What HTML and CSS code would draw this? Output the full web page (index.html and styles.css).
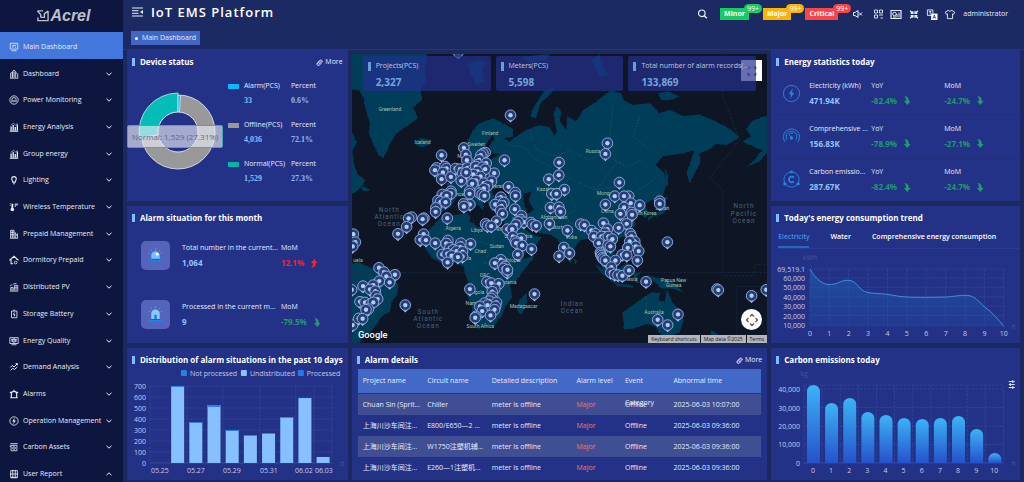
FILE: index.html
```html
<!DOCTYPE html>
<html lang="en">
<head>
<meta charset="utf-8">
<title>IoT EMS Platform</title>
<link rel="stylesheet" href="styles.css">
</head>
<body>
<svg class="defs" aria-hidden="true">
  <defs>
    <symbol id="chev" viewBox="0 0 8 8"><path d="M1.5 2.8 4 5.2 6.500 2.800" fill="none" stroke="currentColor"/></symbol>
    <symbol id="up" viewBox="0 0 8 10"><path d="M4.300 0 8 4.500H6C6 7.500 4.800 9.500 1 10 2.600 8.500 2.800 6.500 2.800 4.500H.600Z" fill="currentColor"/></symbol>
    <symbol id="down" viewBox="0 0 8 10"><path d="M4.300 10 8 5.500H6C6 2.500 4.800.5 1 0 2.600 1.500 2.800 3.500 2.800 5.500H.600Z" fill="currentColor"/></symbol>
    <symbol id="clip" viewBox="0 0 8 8"><path d="M1 5.500 4.500 1.500Q6 .5 7 2T6 4.500L4 7Q2.500 8 1.500 7T1.600 4.800L4.500 2M3 6 6 2.500" fill="none" stroke="currentColor"/></symbol>
    <symbol id="i-energy" viewBox="0 0 12 12"><path d="M1 11h10M2.500 10V5.500M5 10V3.500M7.500 10V6M10 10V3" stroke="currentColor" stroke-width="1.600"/><path d="M2 4 5.500 1.500 8 4 10 1.500" fill="none" stroke="currentColor" stroke-width=".7"/></symbol>
  </defs>
</svg>
<div class="app">
  <aside class="side">
    <div class="logo">
      <svg viewBox="0 0 13 13"><path d="M.5 1h6M.5 1 4 5v3M12 1v10.500H1V8M7.500 4.500 12 1M4 8h4V4" fill="none" stroke="currentColor" stroke-width="1.500"/></svg>
      <span>Acrel</span>
    </div>
    <nav class="menu">
      <a href="#" class="on"><svg viewBox="0 0 12 12"><path d="M1.500 1.500h9v7h-9zM3 10.500h6M3.500 4h5M3.500 6h2M7 6h1.500" fill="none" stroke="currentColor"/></svg>Main Dashboard</a>
      <a href="#"><svg viewBox="0 0 12 12"><path d="M1 11h10M2 10.500V5l2-1v6.500M4.500 10.500V2.500L6 1.500l2 1.500v7.500M8.500 4.500 10.500 6v4.500M6.200 3v7" fill="none" stroke="currentColor"/></svg>Dashboard<svg class="chev"><use href="#chev"/></svg></a>
      <a href="#"><svg viewBox="0 0 12 12"><circle cx="6" cy="6" r="5" fill="none" stroke="currentColor"/><path d="M3.500 8.500V5.500a2.500 2.500 0 0 1 5 0v3M5 8.500V6M7 8.500V6" fill="none" stroke="currentColor"/></svg>Power Monitoring<svg class="chev"><use href="#chev"/></svg></a>
      <a href="#"><svg><use href="#i-energy"/></svg>Energy Analysis<svg class="chev"><use href="#chev"/></svg></a>
      <a href="#"><svg><use href="#i-energy"/></svg>Group energy<svg class="chev"><use href="#chev"/></svg></a>
      <a href="#"><svg viewBox="0 0 12 12"><path d="M4.500 8.500C4.500 7 3.300 6.600 3.300 4.600a2.700 2.700 0 0 1 5.400 0C8.700 6.600 7.500 7 7.500 8.500zM5 10.500h2" fill="none" stroke="currentColor" stroke-width="1.300"/></svg>Lighting<svg class="chev"><use href="#chev"/></svg></a>
      <a href="#"><svg viewBox="0 0 12 12"><path d="M4 2v6" stroke="currentColor" stroke-width="2.200"/><circle cx="4" cy="9" r="2.200" fill="currentColor"/><path d="M7 2.500h4M7.500 2.500V6M9.500 2.500v2M1 2h1M1 4h1" fill="none" stroke="currentColor"/></svg>Wireless Temperature<svg class="chev"><use href="#chev"/></svg></a>
      <a href="#"><svg viewBox="0 0 12 12"><path d="M1 11h10M2 11V1.500h4V11M4 2v9M2 4h4M2 7h4M7.500 4v7M7.500 5 10 8.500M10 5v6" fill="none" stroke="currentColor"/></svg>Prepaid Management<svg class="chev"><use href="#chev"/></svg></a>
      <a href="#"><svg viewBox="0 0 12 12"><path d="M.5 6.500 6 1.500l5.500 5M2.500 5.500v5h2.500M9.500 5v1" fill="none" stroke="currentColor" stroke-width="1.300"/><circle cx="8" cy="9" r="1.600" fill="none" stroke="currentColor"/></svg>Dormitory Prepaid<svg class="chev"><use href="#chev"/></svg></a>
      <a href="#"><svg viewBox="0 0 12 12"><path d="M1 11h10M2 10.500V6.500h3v4M3.500 6.500v4M6.500 10.500V4h4v6.500M8.500 4v6.500M1 4.500 4 3M5 2.500 9 1.500M6.500 7h4" fill="none" stroke="currentColor" stroke-width=".9"/></svg>Distributed PV<svg class="chev"><use href="#chev"/></svg></a>
      <a href="#"><svg viewBox="0 0 12 12"><path d="M3 2.500h6.500v8H3zM5 1.500h2.500M6.500 4 5.200 6.500h2L6 9" fill="none" stroke="currentColor"/></svg>Storage Battery<svg class="chev"><use href="#chev"/></svg></a>
      <a href="#"><svg viewBox="0 0 12 12"><path d="M1 2h10v7H1zM3 10.500h6M2.500 4h7M2.500 6h7" fill="none" stroke="currentColor"/><circle cx="6" cy="5.500" r="2" fill="none" stroke="currentColor"/></svg>Energy Quality<svg class="chev"><use href="#chev"/></svg></a>
      <a href="#"><svg viewBox="0 0 12 12"><path d="M1.500 6.500 4 4l2 2 4-4M2 10l2.500-2.500 2 1.500L10 6M8 2h2v2" fill="none" stroke="currentColor" stroke-width="1.200"/></svg>Demand Analysis<svg class="chev"><use href="#chev"/></svg></a>
      <a href="#"><svg viewBox="0 0 12 12"><path d="M2.800 10V6a3.200 3.200 0 0 1 6.400 0v4M1.500 10.500h9M6 1v1.500M1 3.500l1.500 1M11 3.500l-1.500 1" fill="none" stroke="currentColor" stroke-width="1.400"/></svg>Alarms<svg class="chev"><use href="#chev"/></svg></a>
      <a href="#"><svg viewBox="0 0 12 12"><circle cx="6" cy="6" r="5" fill="none" stroke="currentColor"/><path d="M6.800 2 3.800 6.500h1.900L5.200 10l3-4.500H6.300z" fill="currentColor"/></svg>Operation Management<svg class="chev"><use href="#chev"/></svg></a>
      <a href="#"><svg viewBox="0 0 12 12"><path d="M1.500 2h9M2.500 4h7v6.500h-7zM1.500 4v2" fill="none" stroke="currentColor"/><circle cx="6" cy="7.200" r="1.600" fill="none" stroke="currentColor"/></svg>Carbon Assets<svg class="chev"><use href="#chev"/></svg></a>
      <a href="#"><svg viewBox="0 0 12 12"><path d="M2 2h8v8.500H2zM4.500 1v10M7.500 1v10M1 6h10M2 10h8" fill="none" stroke="currentColor"/></svg>User Report<svg class="chev flip"><use href="#chev"/></svg></a>
    </nav>
  </aside>

  <div class="main">
    <header class="top">
      <div class="bar">
        <svg class="fold" viewBox="0 0 11 10"><path d="M0 1h11M0 3.700h6.500M0 6.300h6.500M0 9h11" stroke="currentColor"/><path d="M11 3v4L8 5z" fill="currentColor"/></svg>
        <h1>IoT EMS Platform</h1>
        <div class="tools">
          <button class="ic" aria-label="Search"><svg viewBox="0 0 10 10"><circle cx="4.300" cy="4.300" r="3.300" fill="none" stroke="currentColor" stroke-width="1.200"/><path d="m6.800 6.800 2.500 2.500" stroke="currentColor" stroke-width="1.400"/></svg></button>
          <button class="lvl minor">Minor<span>99+</span></button>
          <button class="lvl major">Major<span>99+</span></button>
          <button class="lvl crit">Critical<span>99+</span></button>
          <button class="ic mute" aria-label="Mute"><svg viewBox="0 0 10 10"><path d="M1 3.500h1.500L5.500 1.500v7L2.500 6.500H1zM6.500 3.500l3 3M9.500 3.500l-3 3" fill="none" stroke="currentColor"/></svg></button>
          <button class="ic" aria-label="Apps"><svg viewBox="0 0 10 10"><path d="M1 1h3v3H1zM6 1h3v3H6zM1 6h3v3H1zM5.500 6h4M7 9h2.500" fill="none" stroke="currentColor" stroke-width=".9"/></svg></button>
          <button class="ic wide" aria-label="Charts"><svg viewBox="0 0 12 10"><path d="M1 1h10v8H1z" fill="none" stroke="currentColor" stroke-width="1.200"/><circle cx="4.500" cy="4.500" r="1.800" fill="none" stroke="currentColor"/><path d="M7 8V4.500M9 8V3M3 7.500h3" stroke="currentColor"/></svg></button>
          <button class="ic wide" aria-label="Full screen"><svg viewBox="0 0 10 10"><path d="M1.500 1.500 4 4M8.500 1.500 6 4M1.500 8.500 4 6M8.500 8.500 6 6M4 2v2H2M6 2v2h2M4 8V6H2M6 8V6h2" fill="none" stroke="currentColor" stroke-width="1.300"/></svg></button>
          <button class="ic wide" aria-label="Language"><svg viewBox="0 0 12 12"><path d="M1 1h6v6H1zM2.500 3h3M4 2v4" fill="none" stroke="currentColor"/><path d="M5 5h7v7H5z" fill="#fff"/><path d="m7 10.500 1.500-4 1.500 4M7.500 9.200h2" fill="none" stroke="#1c2a64" stroke-width=".8"/></svg></button>
          <button class="ic wide" aria-label="Theme"><svg viewBox="0 0 12 12"><path d="M4 1.500 .8 3.500 2 5.800l1.200-.5v5.200h5.600V5.300l1.200.5 1.200-2.300L8 1.500Q6 3.500 4 1.500z" fill="none" stroke="currentColor"/></svg></button>
          <a href="#" class="user">administrator</a>
        </div>
      </div>
      <a href="#" class="tab">Main Dashboard</a>
    </header>

    <main class="grid">
      <section class="panel device">
        <h2>Device status</h2><a href="#" class="more"><svg><use href="#clip"/></svg>More</a>
        <div class="split">
          <div class="pie">
            <svg viewBox="0 0 90 90">
              <circle cx="45" cy="45" r="28.500" fill="none" stroke="#999" stroke-width="17"/>
              <circle cx="45" cy="45" r="37" fill="none" stroke="#cfd2e0"/>
              <path d="M45 45V6A39 39 0 0 0 6.400 50.600z" fill="#04bdb9" stroke="#c5e8ef" stroke-width=".8"/>
              <path d="M45 45V8.500l2.600.1z" fill="#18b6f8" stroke="#c5e8ef" stroke-width=".8"/>
              <circle cx="45" cy="45" r="20" fill="#233287" stroke="#dfe2ee"/>
            </svg>
            <div class="tip">Normal: 1,529 (27.31%)</div>
          </div>
          <dl class="stat">
            <div><i class="c1"></i><dt>Alarm(PCS)</dt><dt>Percent</dt><dd>33</dd><dd>0.6%</dd></div>
            <div><i class="c2"></i><dt>Offline(PCS)</dt><dt>Percent</dt><dd>4,036</dd><dd>72.1%</dd></div>
            <div><i class="c3"></i><dt>Normal(PCS)</dt><dt>Percent</dt><dd>1,529</dd><dd>27.3%</dd></div>
          </dl>
        </div>
      </section>

      <section class="panel month">
        <h2>Alarm situation for this month</h2>
        <div class="rows">
          <div class="arow">
            <div class="tile"><svg viewBox="0 0 20 20"><path d="M5 14V10a5 5 0 0 1 10 0v4z" fill="#79bdfb"/><circle cx="12" cy="8.500" r="1.700" fill="#fff"/><path d="M3.500 14h13v2.500h-13z" fill="#1d86e0"/><path d="M5.500 14h9v1h-9z" fill="#1a55b0"/><path d="M10 1v2M4.500 3l1 1.500M15.500 3l-1 1.500M2 7l1.500.5M18 7l-1.500.5" stroke="#5aa6f0"/></svg></div>
            <div><p>Total number in the current...</p><b>1,064</b></div>
            <div><p>MoM</p><b class="red">12.1%<svg><use href="#up"/></svg></b></div>
          </div>
          <div class="arow">
            <div class="tile"><svg viewBox="0 0 20 20"><path d="M5 16V9a5 5 0 0 1 10 0v7z" fill="#8ac8ff"/><path d="M8.500 16v-4.500a1.500 1.500 0 0 1 3 0V16z" fill="#1d7fd8"/><path d="M2 15.500h16V18H2z" fill="#1d86e0"/><path d="M4 15.500h12v1H4z" fill="#1a55b0"/><path d="M10 0v2M4.500 2l1 1.500M15.500 2l-1 1.500M2 6l1.500.5M18 6l-1.500.5" stroke="#5aa6f0"/></svg></div>
            <div><p>Processed in the current m...</p><b>9</b></div>
            <div><p>MoM</p><b class="green">-79.5%<svg><use href="#down"/></svg></b></div>
          </div>
        </div>
      </section>

      <section class="panel dist">
        <h2>Distribution of alarm situations in the past 10 days</h2>
        <svg class="chart" id="dist" viewBox="127 367 221 113" role="img" aria-label="Alarm distribution"></svg>
      </section>

      <section class="map">
        <svg id="map" viewBox="6 12 1248 868" preserveAspectRatio="xMidYMid slice">
          <defs>
            <filter id="rough" x="0" y="0" width="100%" height="100%"><feTurbulence type="fractalNoise" baseFrequency=".12" numOctaves="3" seed="4"/><feDisplacementMap in="SourceGraphic" scale="7" xChannelSelector="R" yChannelSelector="G"/></filter>
            <g id="pin"><path d="M-10 11 0 22 10 11Z" fill="#a5cdfa"/><circle r="16" fill="#2b3d70" stroke="#86a8dc" stroke-width="3"/><circle r="6.500" fill="#a9d3ff"/></g>
          </defs>
          <path d="M0 0h1260v900H0z" fill="#0e1626"/>
          <g filter="url(#rough)">
            <g fill="#023e58">
              <path d="M0 0H235L222 60 228 90 212 120 216 150 190 172 204 205 172 228 140 250 118 285 102 325 86 316 70 282 56 250 60 220 48 180 40 140 25 120 0 118Z"/>
              <path d="M0 245 8 250 20 280 6 300 14 350 24 375 46 390 38 405 20 425 0 435Z"/><path d="M36 408 60 420 46 425 36 420Z"/>
              <path d="M195 272 215 264 242 270 240 284 216 292 200 286Z"/>
              <path d="M0 640 30 640 75 660 100 680 130 690 145 705 142 735 125 755 120 785 95 800 75 830 60 850 42 862 20 885 0 890Z"/>
              <path d="M265 510 300 498 350 490 362 500 360 515 385 532 400 522 430 532 466 532 482 560 500 600 515 628 545 622 556 618 530 652 500 690 480 705 487 742 468 768 455 800 430 830 385 837 374 815 365 770 350 732 356 700 345 672 342 650 315 638 280 642 250 628 228 600 222 570 240 538Z"/>
              <path d="M530 730 532 752 515 795 502 785 508 752Z"/>
              <path d="M262 440 300 436 308 420 286 402 330 388 345 375 358 345 345 325 338 300 352 275 370 240 385 222 405 214 430 205 465 222 490 238 488 262 460 264 478 275 505 255 530 240 565 226 600 232 612 255 622 250 612 190 622 168 634 185 630 215 650 240 652 200 680 215 700 180 740 155 780 122 815 130 820 150 850 165 900 160 930 190 960 180 1000 198 1050 194 1100 215 1145 240 1170 262 1130 286 1100 282 1075 300 1050 310 1052 338 1035 370 1020 400 1010 370 1022 335 1035 300 990 312 940 318 918 345 942 368 952 400 938 440 902 452 884 465 898 490 888 505 872 495 858 480 842 490 858 520 842 552 802 568 782 562 800 600 778 628 758 612 772 650 780 682 758 655 746 612 736 582 715 566 690 572 672 600 664 642 650 625 634 590 624 568 602 555 572 552 550 540 528 528 545 555 575 562 550 598 508 622 495 595 475 552 462 525 458 492 425 484 412 455 398 442 400 482 384 465 370 440 382 465 372 472 350 440 322 440 302 472 276 486 256 480Z"/>
              <path d="M275 330 300 350 308 386 274 390 286 366Z"/><path d="M250 356 270 356 268 382 250 382Z"/>
              <path d="M612 112 582 125 550 175 542 200 558 205 572 160 596 138 616 115Z"/>
              <path d="M350 45 380 30 410 35 395 60 405 95 380 105 365 75ZM515 20 600 12 590 30 540 40ZM725 30 750 15 765 60 780 75 750 80ZM925 130 955 125 990 140 960 150 935 150Z"/>
              <path d="M1260 198 1235 202 1205 215 1190 240 1205 260 1178 275 1210 290 1238 300 1215 330 1188 352 1230 335 1260 300Z"/>
              <path d="M948 355 956 380 954 412 948 395ZM928 440 955 442 946 455 955 475 940 492 912 500 896 512 895 502 930 484 938 460Z"/>
              <path d="M850 570 862 575 860 595 880 630 868 648 856 615ZM672 625 682 634 676 646Z"/>
              <path d="M736 642 772 668 802 700 790 698 752 668ZM802 656 836 640 842 668 824 692 804 684ZM795 700 850 708 850 714 800 708ZM852 672 875 666 862 680 870 700 856 698Z"/>
              <path d="M890 674 918 684 945 686 975 702 1002 728 965 716 935 716 915 696Z"/>
              <path d="M818 788 865 755 888 738 905 728 932 730 926 750 944 758 952 720 968 758 992 782 1002 812 990 848 966 858 936 856 918 832 892 822 852 836 824 840ZM1085 842 1108 856 1090 885 1076 885Z"/>
            </g>
            <path d="M428 256 404 290 400 320 378 346 396 348 424 328 452 312 418 306 418 290 434 266ZM425 420 450 412 485 428 470 440 430 438ZM520 432 545 424 536 452 552 480 534 492 522 462ZM462 540 470 538 506 615 498 618ZM512 512 528 532 548 546 540 550 518 530Z" fill="#0e1626"/>
            <path d="M470 285 520 290 560 330 600 350 650 380 690 400 740 420 800 410 850 430 900 400 930 370M540 240 560 300 620 320 660 300 720 330 760 310 830 350 880 330M790 160 780 260 800 340 740 420M870 200 850 260 900 300M560 420 600 440 660 430 680 480 640 500 600 490 560 470M640 500 690 540 720 530 760 540M280 540 330 580 330 620M370 510 375 570 350 620M430 535 430 590 400 640 480 650M375 570 430 590M400 720 440 700 480 710M390 790 420 760 460 770M890 740V820M930 760V850M60 690 90 740 70 800" fill="none" stroke="#1f5468" stroke-width="2" stroke-dasharray="5 4"/>
          </g>
          <path d="M6 668H1254M1120 12V140L1170 270 1080 385 1120 420V678H1215V645H1254M1160 880V710H1254" fill="none" stroke="#1d2f43" stroke-width="2" stroke-dasharray="8 4"/>
          <g class="place">
            <text x="120" y="183">Greenland</text><text x="218" y="283">Iceland</text><text x="421" y="254">Finland</text><text x="380" y="287">Sweden</text><text x="332" y="323">No</text><text x="730" y="310">Russia</text><text x="450" y="414">Ukraine</text><text x="320" y="438">France</text><text x="600" y="424">Kazakhstan</text><text x="772" y="434">Mongolia</text><text x="773" y="491">China</text><text x="880" y="497">South Korea</text><text x="938" y="482">Japan</text><text x="612" y="508">Afghanistan</text><text x="625" y="538">Pakistan</text><text x="665" y="568">India</text><text x="310" y="541">Algeria</text><text x="381" y="547">Libya</text><text x="450" y="541">Egypt</text><text x="500" y="514">Iraq</text><text x="505" y="564">Saudi Arabia</text><text x="391" y="611">Chad</text><text x="441" y="596">Sudan</text><text x="340" y="632">Nigeria</text><text x="485" y="636">Ethiopia</text><text x="405" y="683">DRC</text><text x="470" y="704">Tanzania</text><text x="380" y="732">Angola</text><text x="375" y="765">Namibia</text><text x="521" y="774">Madagascar</text><text x="391" y="836">South Africa</text><text x="913" y="792">Australia</text><text x="972" y="696">Papua New</text><text x="972" y="711">Guinea</text><text x="830" y="694">Indonesia</text><text x="24" y="638">uela</text>
          </g>
          <g class="sea">
            <text x="118" y="486">North</text><text x="118" y="508">Atlantic</text><text x="118" y="530">Ocean</text>
            <text x="235" y="792">South</text><text x="235" y="814">Atlantic</text><text x="235" y="836">Ocean</text>
            <text x="667" y="769">Indian</text><text x="667" y="790">Ocean</text>
            <text x="1183" y="476">North</text><text x="1183" y="498">Pacific</text><text x="1183" y="519">Ocean</text>
          </g>
          <g id="pins"></g>
          <text class="google" x="24" y="866">Google</text>
        </svg>
        <div class="zoomer"><button aria-label="Toggle full screen"><svg viewBox="0 0 12 12"><path d="M1.500 4V1.500H4M8 1.500h2.500V4M1.500 8v2.500H4M8 10.500h2.500V8" fill="none" stroke="#555" stroke-width="1.500"/></svg></button></div>
        <div class="cards">
          <div><p>Projects(PCS)</p><b>2,327</b></div>
          <div><p>Meters(PCS)</p><b>5,598</b></div>
          <div><p>Total number of alarm records(...</p><b>133,869</b></div>
        </div>
        <button class="pan" aria-label="Map camera controls"><svg viewBox="0 0 14 14"><path d="M5 3.500 7 1.500l2 2M5 10.500l2 2 2-2M3.500 5l-2 2 2 2M10.500 5l2 2-2 2" fill="none" stroke="#555" stroke-width="1.300"/></svg></button>
        <div class="legal"><a href="#">Keyboard shortcuts</a><span>Map data ©2025</span><a href="#">Terms</a></div>
      </section>

      <section class="panel details">
        <h2>Alarm details</h2><a href="#" class="more"><svg><use href="#clip"/></svg>More</a>
        <table>
          <thead><tr><th class="w2">Project name</th><th class="w2">Circuit name</th><th class="w3">Detailed description</th><th class="w1">Alarm level</th><th class="w1"><div>Event Category</div></th><th>Abnormal time</th></tr></thead>
          <tbody>
            <tr><td>Chuan Sin (Sprit...</td><td>Chiller</td><td>meter is offline</td><td class="mj">Major</td><td>Offline</td><td>2025-06-03 10:07:00</td></tr>
            <tr><td>上海川沙车间注...</td><td>E800/E650—2 ...</td><td>meter is offline</td><td class="mj">Major</td><td>Offline</td><td>2025-06-03 09:36:00</td></tr>
            <tr><td>上海川沙车间注...</td><td>W1750注塑机辅...</td><td>meter is offline</td><td class="mj">Major</td><td>Offline</td><td>2025-06-03 09:36:00</td></tr>
            <tr><td>上海川沙车间注...</td><td>E260—1注塑机...</td><td>meter is offline</td><td class="mj">Major</td><td>Offline</td><td>2025-06-03 09:36:00</td></tr>
          </tbody>
        </table>
      </section>

      <section class="panel energy">
        <h2>Energy statistics today</h2>
        <div class="rows">
          <div class="erow"><svg viewBox="0 0 20 20"><circle cx="10" cy="10" r="8.500"/><path d="M11.500 4.500 7 10.800h2.600L8.500 15.500 13 9.300h-2.700z" class="f"/></svg><div><p>Electricity (kWh)</p><b>471.94K</b></div><div><p>YoY</p><b class="green">-82.4%<svg><use href="#down"/></svg></b></div><div><p>MoM</p><b class="green">-24.7%<svg><use href="#down"/></svg></b></div></div>
          <div class="erow"><svg viewBox="0 0 20 20"><path d="M3.500 16A8.500 8.500 0 1 1 16.500 16M5.500 13.500a5.700 5.700 0 1 1 9 0M7 7.500l3 3.500M8 6.500h4"/><circle cx="10" cy="11.500" r="1.800" class="f"/></svg><div><p>Comprehensive ...</p><b>156.83K</b></div><div><p>YoY</p><b class="green">-78.9%<svg><use href="#down"/></svg></b></div><div><p>MoM</p><b class="green">-27.1%<svg><use href="#down"/></svg></b></div></div>
          <div class="erow"><svg viewBox="0 0 20 20"><circle cx="10" cy="10" r="8"/><path d="M12.500 8a3 3 0 1 0 0 4" stroke-width="1.800"/><circle cx="10" cy="2" r="1.500" class="f"/><circle cx="3" cy="14.500" r="1.700" class="f"/><circle cx="17" cy="14.500" r="1.700" class="f"/></svg><div><p>Carbon emissio...</p><b>287.67K</b></div><div><p>YoY</p><b class="green">-82.4%<svg><use href="#down"/></svg></b></div><div><p>MoM</p><b class="green">-24.7%<svg><use href="#down"/></svg></b></div></div>
        </div>
      </section>

      <section class="panel trend">
        <h2>Today's energy consumption trend</h2>
        <div class="tabs"><button class="on">Electricity</button><button>Water</button><button>Comprehensive energy consumption</button></div>
        <svg class="chart" id="trend" viewBox="771 249 249 94" role="img" aria-label="Energy trend"></svg>
      </section>

      <section class="panel carbon">
        <h2>Carbon emissions today</h2>
        <svg class="chart" id="carbon" viewBox="771 367 249 113" role="img" aria-label="Carbon emissions"></svg>
      </section>
    </main>
  </div>
</div>
<script src="script.js"></script>
</body>
</html>
```
FILE: styles.css
```css
* { box-sizing: border-box; }
body {
  margin: 0;
  height: 100vh;
  overflow: hidden;
  background: #1b2960;
  color: #e8ebf8;
  font: 7px/10px "Open Sans", "Noto Sans", "Noto Sans CJK SC", sans-serif;
}
h1, h2, p, dl, dd { margin: 0; }
a { color: inherit; text-decoration: none; }
button { font: inherit; color: inherit; background: none; border: 0; padding: 0; }
svg { display: block; flex: none; }
.defs { position: absolute; width: 0; height: 0; }
.app { display: grid; grid-template-columns: 12% 1fr; height: 100%; }

/* Sidebar */
.side { background: #0d163e; overflow: hidden; }
.logo {
  display: flex; align-items: center; justify-content: center; gap: 1px;
  height: 32px; padding-left: 5px; color: #bcbfcb;
  font: italic bold 16px/30px "Liberation Sans", sans-serif;
}
.logo svg { width: 12px; height: 12px; }
.menu { display: grid; grid-auto-rows: 1fr; min-height: 454px; }
.menu a { display: flex; align-items: center; gap: 4px; padding: 3px 10px 0 9px; white-space: nowrap; }
.menu a.on { background: #4377dc; }
.menu svg { width: 10px; height: 10px; }
.menu .chev { width: 8px; height: 8px; margin-left: auto; }
.menu .flip { transform: scaleY(-1); }

/* Header */
.main { display: flex; flex-direction: column; min-width: 0; background: #1b2960; }
.top { height: 50px; flex: none; padding: 0 16px 0 8px; border-bottom: 1px solid #26367b; background: #1c2a64; }
.bar { display: flex; align-items: center; height: 28px; }
.fold { width: 11px; height: 10px; margin: 0 8px 4px 1px; }
h1 { font-size: 13px; font-weight: 600; letter-spacing: 1px; padding-bottom: 4px; color: #fff; }
.tools { display: flex; align-items: center; gap: 6px; margin-left: auto; }
.ic svg { height: 10px; width: 11px; }
.ic.wide svg { height: 11px; width: 12px; }
.tools .ic:first-child { margin-right: 4px; }
.lvl { position: relative; height: 12px; padding: 0 4px; margin: 0 6px 0 2px; font-weight: 700; color: #fff; }
.lvl span { position: absolute; left: calc(100% - 5px); top: -4px; padding: 0 3px; border-radius: 5px; line-height: 9px; font-weight: 400; background: inherit; }
.minor { background: #18c964; }
.major { background: #fdb400; }
.crit { background: #fb4545; }
.mute { margin: 0 4px 0 2px; }
.user { margin-left: 1px; }
.tab { display: flex; align-items: center; gap: 4px; width: max-content; height: 14px; margin-top: 3px; padding: 0 4px; background: #4167c6; }
.tab::before { content: ""; width: 3px; height: 3px; border-radius: 50%; background: #fff; }

/* Dashboard grid */
.grid {
  flex: 1; min-height: 0;
  display: grid; gap: 5px 4px; padding: 0 4px 2px;
  grid-template-columns: 221fr 416fr 249fr;
  grid-template-rows: 151fr 137fr 132fr;
  grid-template-areas: "a m e" "b m t" "c d f";
}
.grid > * { min-width: 0; min-height: 0; }
.device { grid-area: a; } .month { grid-area: b; } .dist { grid-area: c; }
.map { grid-area: m; } .details { grid-area: d; }
.energy { grid-area: e; } .trend { grid-area: t; } .carbon { grid-area: f; }
.panel { position: relative; display: flex; flex-direction: column; background: #233287; overflow: hidden; }
h2 { display: flex; align-items: center; gap: 5px; flex: none; height: 19px; padding: 5px 0 0 5px; font-size: 8px; font-weight: 700; color: #fff; white-space: nowrap; }
h2::before { content: ""; width: 3px; height: 8px; background: #82bcfb; }
.more { position: absolute; right: 5px; top: 7px; display: flex; align-items: center; gap: 2px; }
.more svg { width: 7px; height: 7px; }
.chart { width: 100%; flex: 1; min-height: 0; }
.chart text { fill: #c3cbe8; }
.chart .dim { fill: #46568f; }
.rows { flex: 1; display: flex; flex-direction: column; }

.split { flex: 1; display: grid; grid-template-columns: 101px 1fr; align-items: center; padding-bottom: 6px; }
.pie { position: relative; }
.pie svg { width: 90px; height: 90px; margin-left: 6px; }
.tip { position: absolute; left: 0; top: 38px; padding: 5px 4px; border: 1px solid #4aa5ae; border-radius: 2px; background: rgba(233, 236, 245, .65); color: #62688a; font-size: 8px; line-height: 11px; white-space: nowrap; }
.stat { display: grid; gap: 14px; }
.stat div { display: grid; grid-template-columns: 11px 42px 1fr; gap: 4px 5px; }
.stat i { height: 5px; margin-top: 3px; }
.stat dd { font: bold 8px/11px "Liberation Serif", serif; color: #8abcf8; }
.stat dd:nth-of-type(1) { grid-column: 2; }
.c1 { background: #10b6fa; } .c2 { background: #999; } .c3 { background: #05b1a8; }

b { display: flex; align-items: center; gap: 6px; font-size: 8px; color: #93c4fc; line-height: 10px; }
b svg { width: 8px; height: 9px; }
.green { color: #219a6c; } .red { color: #f5222d; }
p { white-space: nowrap; }
.arow { flex: 1; display: grid; grid-template-columns: 38px 96px 1fr; column-gap: 3px; align-items: center; padding: 2px 5px 0 14px; }
.arow p, .erow p { margin-bottom: 5px; }
.tile { width: 29px; height: 29px; border-radius: 5px; background: #5464bb; display: grid; place-items: center; }
.tile svg { width: 17px; height: 17px; }
.energy .rows { padding-top: 3px; }
.erow { flex: 1; display: grid; grid-template-columns: 20px 63px 70px 1fr; column-gap: 3px; align-items: center; padding-left: 11px; }
.erow + .erow { border-top: 1px solid #202e7c; }
.erow > svg { width: 19px; height: 19px; fill: none; stroke: #2787e0; stroke-width: 1; }
.erow .f { fill: #2787e0; stroke: none; }
.erow > div:first-of-type { margin-left: 4px; }

.tabs { display: flex; gap: 21px; flex: none; margin-left: 7px; border-bottom: 1px solid #2a3b92; font-weight: 600; color: #fff; }
.tabs button { height: 23px; padding-top: 2px; border-bottom: 2px solid transparent; }
.tabs .on { color: #58a8f4; font-weight: 400; border-color: #2568c4; }

/* Map */
.map { position: relative; margin-top: 4px; overflow: hidden; background: #0e1626; }
#map { width: 100%; height: 100%; }
.place text { font: 15px "Roboto", sans-serif; text-anchor: middle; fill: #a3c4ae; }
.sea text { font: 19px "Roboto", sans-serif; letter-spacing: 3px; text-anchor: middle; fill: #4c657b; }
.google { font: 500 28px "Roboto", sans-serif; fill: #fff; }
.cards { position: absolute; top: 2px; left: 11px; right: 11px; display: grid; grid-template-columns: repeat(3, 1fr); gap: 5px; }
.cards div { min-width: 0; height: 35px; padding: 5px 4px 0 13px; border-radius: 2px; background: rgba(36, 48, 143, .7); position: relative; }
.cards div::before { content: ""; position: absolute; left: 5px; top: 6px; width: 3px; height: 9px; background: #659fd6; }
.cards p { color: #c3c8de; }
.cards b { margin-top: 5px; font-size: 10px; line-height: 12px; color: #73a6dc; }
.zoomer { position: absolute; top: 6px; right: 5px; width: 21px; height: 21px; background: #fff; display: grid; place-items: center; }
.zoomer svg { width: 10px; height: 10px; }
.pan { position: absolute; right: 5px; bottom: 13px; width: 21px; height: 21px; border-radius: 50%; background: #fff; display: grid; place-items: center; }
.pan svg { width: 14px; height: 14px; }
.legal { position: absolute; right: 0; bottom: 0; display: flex; gap: 1px; font-size: 5px; line-height: 8px; color: #111; }
.legal > * { padding: 0 3px; background: #b3b5ba; }

/* Alarm table */
table { width: calc(100% - 12px); margin: 2px 6px 0; border-collapse: collapse; table-layout: fixed; font-size: 7px; }
th, td { height: 21px; padding: 0 0 0 5px; text-align: left; font-weight: 400; white-space: nowrap; }
th { height: 25px; background: #4369c6; background-clip: padding-box; border-bottom: 3px solid transparent; }
th div { height: 22px; line-height: 22px; white-space: normal; }
tbody tr:nth-child(odd) { background: #404e94; }
.w1 { width: 12%; } .w2 { width: 16%; } .w3 { width: 21%; }
.mj { color: #f0804f; }
```
FILE: script.js
```javascript
const NS = "http://www.w3.org/2000/svg";
function add(parent, tag, attrs, text) {
  const node = document.createElementNS(NS, tag);
  for (const key in attrs) node.setAttribute(key, attrs[key]);
  if (text !== undefined) node.textContent = text;
  parent.appendChild(node);
  return node;
}
function line(svg, x1, y1, x2, y2, solid) {
  add(svg, "line", { x1, y1, x2, y2, stroke: solid ? "#3b4a92" : "#2f4196", "stroke-width": 1, "stroke-dasharray": solid ? "none" : "3 1" });
}
function label(svg, x, y, text, anchor, cls) {
  add(svg, "text", { x, y: y + 3, "text-anchor": anchor, class: cls || "" }, text);
}

/* Map pins */
const pins = [
  [482,196],[773,280],[767,312],[628,338],[627,376],[597,388],[644,419],[606,432],[620,432],[602,473],[627,472],[632,486],[599,522],[653,542],[642,593],[628,619],[659,610],
  [809,398],[795,439],[837,439],[823,439],[767,464],[843,460],[870,466],[823,473],[812,492],[845,488],[847,495],[930,454],[930,462],
  [693,523],[704,526],[761,520],[831,522],[807,534],[725,542],[738,552],[732,560],[773,538],[765,550],[755,560],[768,566],[776,560],[788,568],[747,580],[775,586],[782,590],
  [842,552],[845,560],[855,575],[840,575],[858,590],[834,594],[867,604],[863,632],[817,615],[831,617],[752,608],[753,613],[755,618],[758,624],[761,628],[767,632],[797,632],[785,652],[783,668],[795,674],[805,676],[818,678],[838,662],
  [889,696],[953,577],[1102,718],[1106,721],[1206,738],[1250,720],[985,794],[924,810],[954,826],
  [10,553],[16,577],[8,590],[5,720],[8,826],[87,654],[102,667],[135,675],[109,680],[119,698],[88,694],[39,709],[70,706],[60,719],[76,724],[78,738],[83,748],[30,756],[45,758],[62,762],[70,758],[55,778],[48,780],[26,806],[38,807],[166,766],
  [185,502],[176,506],[222,505],[218,508],[170,531],[144,552],[221,553],[211,570],[228,571],[256,580],[292,505],
  [275,316],[342,294],[348,314],[351,331],[406,308],[399,311],[393,316],[388,330],[409,340],[464,331],[433,370],[425,394],[476,411],
  [260,354],[255,361],[285,350],[290,356],[279,368],[275,388],[303,381],[317,356],[330,358],[338,370],[334,393],[353,354],[368,360],[384,344],[378,350],[398,352],[406,358],[383,365],[362,378],[370,374],[392,380],[378,392],[367,402],[349,368],[401,400],[413,408],[402,416],[389,430],[397,434],[404,438],[359,424],[359,432],[303,424],[303,431],[277,434],[290,438],[264,452],[272,456],[287,457],[258,474],[257,486],[360,464],[341,462],[342,470],
  [496,428],[497,438],[453,442],[448,456],[436,464],[462,458],[455,468],[452,482],[458,492],[495,478],[440,514],[407,522],[413,528],[424,529],[515,498],[513,510],[522,517],[505,516],[498,525],[472,538],[487,538],[543,518],[548,524],[559,528],
  [489,560],[514,566],[496,574],[499,580],[517,587],[545,598],[504,614],[288,582],[294,572],[289,581],[362,582],[333,580],[331,592],[300,594],[310,600],[320,604],[338,606],[277,614],[292,612],[305,618],[338,620],[324,622],[293,638],
  [453,630],[435,640],[458,645],[466,650],[461,656],[472,668],[473,660],[411,696],[424,700],[447,702],[360,718],[435,718],[427,726],[428,740],[424,746],[418,754],[404,760],[440,758],[413,766],[437,770],[390,770],[397,784],[434,780],[422,797],[378,800],[376,804],[554,733],[325,6]
];
const pinLayer = document.getElementById("pins");
pins.forEach(([x, y]) => add(pinLayer, "use", { href: "#pin", x, y }));

/* Alarm distribution */
const dist = document.getElementById("dist");
[["#2782dc", "Not processed", 181], ["#8bc3ff", "Undistributed", 241], ["#2278f0", "Processed", 298]].forEach(([fill, name, x]) => {
  add(dist, "rect", { x, y: 370, width: 6, height: 6, rx: 1, fill });
  label(dist, x + 9, 373, name, "start");
});
for (let i = 0; i <= 7; i++) {
  const y = 463 - i * 11;
  label(dist, 146, y, i * 100, "end");
  line(dist, 150, y, 333, y, i === 0);
}
[150, 187, 223, 260, 296, 314, 332].forEach(x => line(dist, x, 386, x, 463));
[0, 386, 422, 405, 430, 435, 433, 417, 398, 457].forEach((top, i) => {
  if (!top) return;
  const x = 153 + i * 18.2;
  add(dist, "rect", { x, y: top, width: 13, height: 463 - top, fill: "#87c0ff" });
  if (i < 8) add(dist, "rect", { x, y: top, width: 13, height: i === 3 ? 2 : 1, fill: "#2f80ee" });
});
[["05.25", 160], ["05.27", 196], ["05.29", 232], ["05.31", 269], ["06.02", 304], ["06.03", 324]].forEach(([t, x]) => label(dist, x, 470, t, "middle"));
label(dist, 342, 463, "d", "middle", "dim");

/* Energy trend */
const trend = document.getElementById("trend");
label(trend, 810, 257, "kWh", "middle", "dim");
["10,000", "20,000", "30,000", "40,000", "50,000", "60,000", "69,519.1"].forEach((t, i) => {
  const y = i === 6 ? 269 : 325 - i * 9.4;
  label(trend, 805, y, t, "end");
  line(trend, 810, y, 1004, y);
});
for (let i = 0; i <= 10; i++) {
  const x = 810 + i * 19.4;
  line(trend, x, 269, x, 326);
  label(trend, x, 333, i, "middle");
}
const curve = "M810 269C816 279 822 284 828 284.500C838 285 840 280 848 280.300C858 280 858 291 868 292.500C875 293.800 880 293.300 887 294.300C895 295.500 900 296.800 907 297C920 297.500 930 297.400 946 297C955 296.600 958 295 968 295.500C975 296 978 301 985 307C993 313 999 320 1004 326.500";
const fade = add(add(trend, "defs", {}), "linearGradient", { id: "tg", x1: 0, y1: 0, x2: 0, y2: 1 });
add(fade, "stop", { offset: 0, "stop-color": "#1c68b4", "stop-opacity": .55 });
add(fade, "stop", { offset: 1, "stop-color": "#1c58ac", "stop-opacity": .2 });
add(trend, "path", { d: curve + "H810Z", fill: "url(#tg)" });
add(trend, "path", { d: curve, fill: "none", stroke: "#3f8ee0", "stroke-width": 1 });
label(trend, 1014, 326, "h", "middle", "dim");

/* Carbon emissions */
const carbon = document.getElementById("carbon");
const grad = add(add(carbon, "defs", {}), "linearGradient", { id: "cg", x1: 0, y1: 0, x2: 0, y2: 1 });
add(grad, "stop", { offset: 0, "stop-color": "#3cb3f6" });
add(grad, "stop", { offset: 1, "stop-color": "#2552cc" });
label(carbon, 804, 373, "kg", "middle", "dim");
for (let i = 0; i <= 4; i++) {
  const y = 463 - i * 18.500;
  label(carbon, 800, y, i ? i * 10 + ",000" : "0", "end");
  line(carbon, 804, y, 1004, y, i === 0);
}
line(carbon, 804, 385, 1004, 385);
for (let i = 0; i <= 11; i++) line(carbon, 804 + i * 18.15, 385, 804 + i * 18.15, 465);
[385, 403, 398, 412, 415, 418, 419, 418, 416, 429, 453].forEach((top, i) => {
  const x = 807 + i * 18.15;
  add(carbon, "path", { d: `M${x} 463V${top + 6}a6.500 6 0 0 1 13 0V463Z`, fill: "url(#cg)" });
  label(carbon, x + 6, 470, i, "middle");
});
label(carbon, 1014, 463, "h", "middle", "dim");
add(carbon, "path", { d: "M1009 381.500h6M1009 384.500h6M1009 387.500h6M1013 380v3M1010.500 383v3M1013 386v3", stroke: "#dfe5f7", fill: "none" });
```
